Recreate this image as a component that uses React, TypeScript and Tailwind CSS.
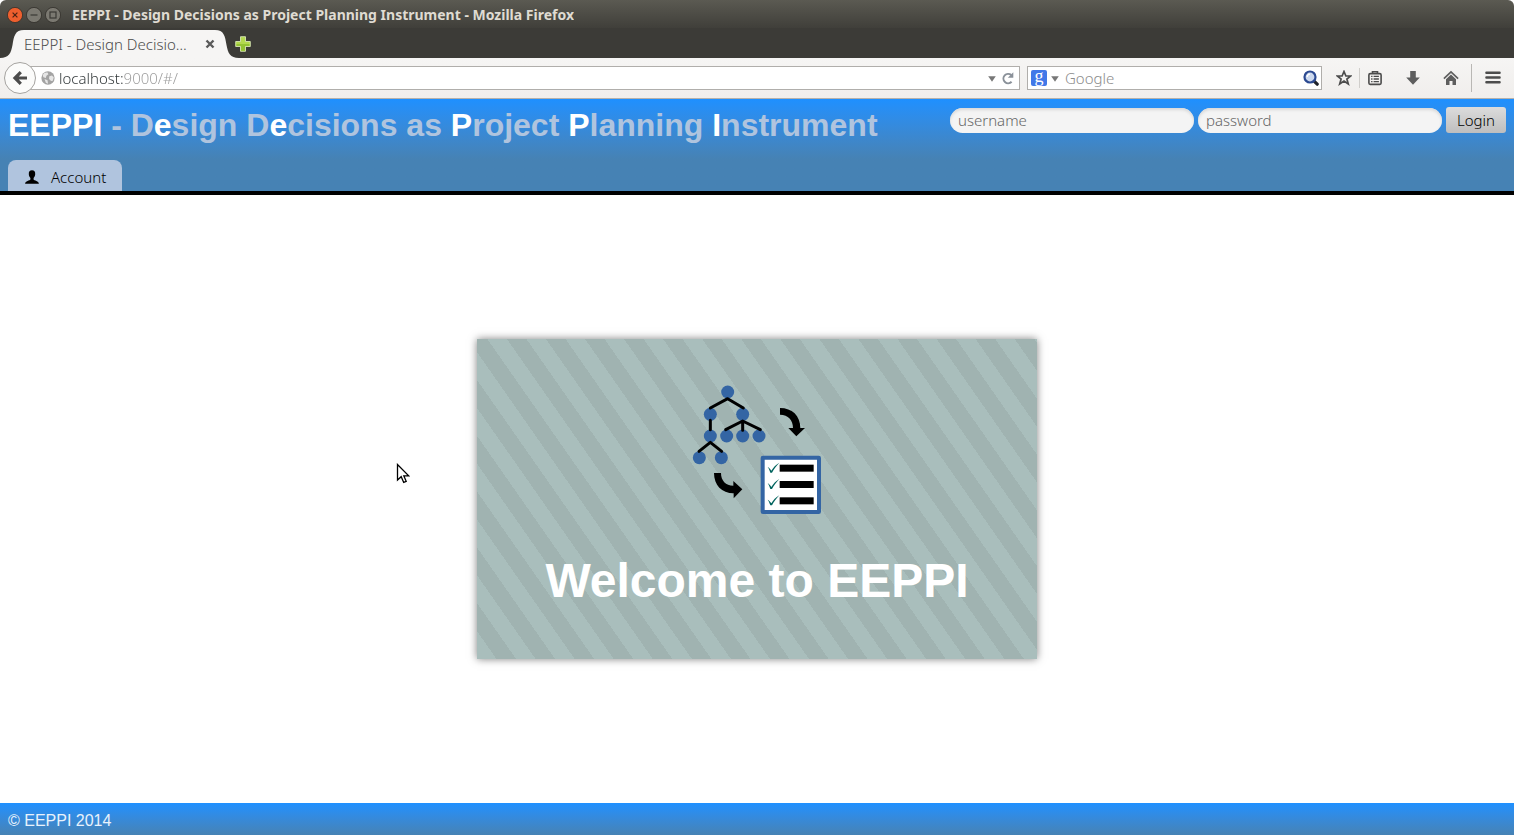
import type { ReactNode } from "react";

function TitleBar() {
  return (
    <div className="flex h-7 items-center gap-[3px] rounded-t-md bg-linear-to-b from-[#5b5a52] to-[#403f3a] pt-0.5 pl-[7px]">
      <button aria-label="Close window" className="size-4">
        <svg viewBox="0 0 16 16" className="size-4">
          <circle cx="8" cy="8" r="7.6" fill="#ee5f2e" stroke="#32302b" strokeWidth="0.8" />
          <path d="M5.600 5.600l4.800 4.800M10.400 5.600l-4.800 4.800" stroke="#4b2415" strokeWidth="1.200" />
        </svg>
      </button>
      <button aria-label="Minimize window" className="size-4">
        <svg viewBox="0 0 16 16" className="size-4">
          <circle cx="8" cy="8" r="7.6" fill="#7b7971" stroke="#32302b" strokeWidth="0.8" />
          <path d="M4.500 8h7" stroke="#3a3934" strokeWidth="1.200" />
        </svg>
      </button>
      <button aria-label="Maximize window" className="size-4">
        <svg viewBox="0 0 16 16" className="size-4">
          <circle cx="8" cy="8" r="7.6" fill="#7b7971" stroke="#32302b" strokeWidth="0.8" />
          <rect x="5" y="5" width="6" height="6" fill="none" stroke="#3a3934" strokeWidth="1.200" />
        </svg>
      </button>
      <p className="ml-2 truncate text-sm leading-5 font-bold text-[#dfdbd2]">
        EEPPI - Design Decisions as Project Planning Instrument - Mozilla Firefox
      </p>
    </div>
  );
}

function TabStrip() {
  return (
    <div className="flex h-[30px] items-end bg-[#3c3b37]">
      <svg viewBox="0 0 24 28" className="h-7 w-6 shrink-0">
        <path d="M0 28C9 28 11 23 12.500 15C14 6 15 0 24 0V28Z" fill="#f6f5f4" />
      </svg>
      <div className="flex h-7 w-[191px] items-center justify-between bg-[#f6f5f4]">
        <span className="text-[15px] leading-5 text-[#4c4c4c]">EEPPI - Design Decisio…</span>
        <button aria-label="Close tab" className="size-[10px]">
          <svg viewBox="0 0 10 10" className="size-[10px]">
            <path d="M1.500 1.500l7 7M8.500 1.500l-7 7" stroke="#5a5a5a" strokeWidth="2.400" />
          </svg>
        </button>
      </div>
      <svg viewBox="0 0 24 28" className="h-7 w-6 shrink-0">
        <path d="M24 28C15 28 13 23 11.500 15C10 6 9 0 0 0V28Z" fill="#f6f5f4" />
      </svg>
      <button aria-label="New tab" className="mb-1.5 -ml-1 size-4">
        <svg viewBox="0 0 16 16" className="size-4">
          <path d="M5.500 .7h5v4.800h4.800v5h-4.800v4.800h-5v-4.800H.7v-5h4.800z" fill="#b3d94f" stroke="#e3f1c0" strokeWidth="0.800" />
          <path d="M1.500 8h13v2h-4.500v4.700H6V10H1.500z" fill="#94c233" />
        </svg>
      </button>
    </div>
  );
}

function DropArrow() {
  return (
    <svg viewBox="0 0 8 6" className="mt-0.5 h-1.5 w-2 shrink-0">
      <path d="M.2 .3h7.600L4 5.800z" fill="#777777" />
    </svg>
  );
}

function ToolButton({ label, children }: { label: string; children: ReactNode }) {
  return (
    <button aria-label={label} className="size-4 shrink-0">
      <svg viewBox="0 0 16 16" className="size-4">
        {children}
      </svg>
    </button>
  );
}

function NavBar() {
  return (
    <div className="flex h-[41px] items-center border-b border-[#b5b0aa] bg-linear-to-b from-[#f6f5f4] to-[#f0eeec] pr-[13px] pl-1">
      <button aria-label="Back" className="z-10 size-8 shrink-0 rounded-full border border-[#a5a3a0] bg-[#fbfbfa] p-[7px]">
        <svg viewBox="0 0 16 16" className="size-4">
          <path d="M8.800 2.200L3 8l5.800 5.800M3.500 8H15" fill="none" stroke="#4c4c4c" strokeWidth="3.200" />
        </svg>
      </button>
      <div className="-ml-2 flex h-6 min-w-0 flex-1 items-center gap-1 border border-[#b0aeab] bg-white pr-[3px] pl-3">
        <svg viewBox="0 0 16 16" className="size-[14px] shrink-0">
          <circle cx="8" cy="8" r="7.600" fill="#a3a3a3" />
          <path d="M2 5C3 2 5.500 1.500 7.500 1.800L8.500 3.600L6.200 5.500L5.500 8L2.800 7.200ZM9.500 6L12.500 5L14.600 7L13.500 11L11.500 11.500L9.200 9ZM4 9L7.500 10.500L8 14.500L5.500 13.500Z" fill="#e6e6e6" />
        </svg>
        <input
          aria-label="Address"
          defaultValue="localhost:9000/#/"
          className="min-w-0 flex-1 bg-linear-to-r from-[#2e3436] from-[64px] to-[#999999] to-[64px] bg-clip-text text-[15px] leading-5 text-transparent caret-black outline-none"
        />
        <DropArrow />
        <button aria-label="Reload" className="size-4">
          <svg viewBox="0 0 16 16" className="size-4">
            <path d="M11.600 11.800A4.700 4.700 0 1 1 11.300 5.100" fill="none" stroke="#8a9199" strokeWidth="2" />
            <path d="M13.300 2.300V7.800H7.800z" fill="#8a9199" />
          </svg>
        </button>
      </div>
      <div className="ml-[7px] flex h-6 w-[295px] shrink items-center gap-1 border border-[#b0aeab] bg-white pr-0.5 pl-[3px]">
        <span className="flex size-4 shrink-0 items-center justify-center rounded-[2px] bg-[#4178e8] font-['Liberation_Serif',serif] text-lg leading-4 font-normal text-white">
          <span className="pb-1">g</span>
        </span>
        <DropArrow />
        <input
          aria-label="Search"
          placeholder="Google"
          className="ml-0.5 min-w-0 flex-1 text-[15px] leading-5 outline-none placeholder:text-[#8c8c8c]"
        />
        <button aria-label="Run search" className="size-4">
          <svg viewBox="0 0 16 16" className="size-4">
            <path d="M10.800 10.800L14.200 14.200" stroke="#20232b" strokeWidth="3.200" strokeLinecap="round" />
            <circle cx="7" cy="7" r="5.500" fill="#cdd9ee" stroke="#2c4a92" strokeWidth="2.200" />
            <path d="M4.200 7A3 3 0 0 1 7 4.200" fill="none" stroke="#ffffff" strokeWidth="1.300" />
          </svg>
        </button>
      </div>
      <div className="flex items-center pl-[14px]">
        <ToolButton label="Bookmark this page">
          <path d="M8 1.500L9.900 6H14.700L10.900 9L12.300 14L8 11.100L3.700 14L5.100 9L1.300 6H6.100Z" fill="none" stroke="#4c4c4c" strokeWidth="1.700" />
        </ToolButton>
        <span className="ml-[7px] h-5 w-px bg-[#d0cecb]" />
        <span className="ml-[7px] flex">
          <ToolButton label="Bookmarks">
            <path d="M5.500 3V1.800h5V3" fill="none" stroke="#4c4c4c" strokeWidth="1.600" />
            <rect x="1.900" y="3.600" width="12.200" height="10.800" rx="1.300" fill="none" stroke="#4c4c4c" strokeWidth="1.600" />
            <path d="M4.100 6.400h1.400M6.600 6.400h5.300M4.100 9h1.400M6.600 9h5.300M4.100 11.600h1.400M6.600 11.600h5.300" stroke="#4c4c4c" strokeWidth="1.400" />
          </ToolButton>
        </span>
        <span className="ml-[22px] flex">
          <ToolButton label="Downloads">
            <path d="M5.200 1h5.600v6.400h4L8 14.800L1.200 7.400h4z" fill="#5e5e5e" />
          </ToolButton>
        </span>
        <span className="ml-[22px] flex">
          <ToolButton label="Home">
            <path d="M.9 8.600L8 1.900l7.100 6.700" fill="none" stroke="#5e5e5e" strokeWidth="1.700" />
            <path d="M3 9.200L8 4.600l5 4.600V15H9.500v-4h-3v4H3z" fill="#5e5e5e" />
          </ToolButton>
        </span>
        <span className="ml-3 h-7 w-px bg-[#b9b7b4]" />
        <span className="ml-[13px] flex">
          <ToolButton label="Open menu">
            <path d="M1.400 2.800h13.200M1.400 7.500h13.200M1.400 12.200h13.200" stroke="#4c4c4c" strokeWidth="2.400" strokeLinecap="round" />
          </ToolButton>
        </span>
      </div>
    </div>
  );
}

function Key({ children }: { children: ReactNode }) {
  return <span className="text-white">{children}</span>;
}

function AppHeader() {
  const field =
    "h-[25px] w-[244px] min-w-0 rounded-full bg-[#f4f4f4] px-2 text-[15px] leading-5 text-black shadow-[inset_0_2px_3px_#d8d8d8] outline-none placeholder:text-[#666666]";
  return (
    <header className="flex h-24 flex-col justify-between border-b-4 border-black bg-linear-to-b from-[#1e90ff] to-[#4682b4] to-[60px] px-2">
      <div className="flex items-start justify-between gap-4">
        <h1 className="mt-2 font-['Liberation_Sans',sans-serif] text-[32px] leading-9 font-bold whitespace-nowrap text-[#b0c4de]">
          <Key>EEPPI</Key> - D<Key>e</Key>sign D<Key>e</Key>cisions as <Key>P</Key>roject <Key>P</Key>lanning{" "}
          <Key>I</Key>nstrument
        </h1>
        <form className="mt-2 flex min-w-0 items-center gap-1" onSubmit={(e) => e.preventDefault()}>
          <input aria-label="username" placeholder="username" className={field} />
          <input aria-label="password" type="password" placeholder="password" className={field} />
          <button className="h-[26px] w-[60px] shrink-0 rounded-[3px] bg-linear-to-b from-[#dcdcdc] to-[#bebebe] text-[15px] leading-5 text-black">
            Login
          </button>
        </form>
      </div>
      <nav className="flex">
        <a href="#/account" className="flex h-[31px] items-center gap-3 rounded-t-lg bg-[#b0c4de] pt-0.5 pr-4 pl-[17px] text-[15px] leading-5 text-black">
          <svg viewBox="0 0 14 14" className="size-[14px]">
            <path d="M7 .2C9.300 .2 10.400 1.800 10.200 4.200C10.100 6 9.300 7.200 8.600 8V9.500C9.200 10.700 13.700 10.900 13.900 13.800H.1C.3 10.900 4.800 10.700 5.400 9.500V8C4.700 7.200 3.900 6 3.800 4.200C3.600 1.800 4.700 .2 7 .2Z" />
          </svg>
          Account
        </a>
      </nav>
    </header>
  );
}

const nodes = [
  [143, 51], [91, 118], [188, 118], [91, 183], [140, 183], [188, 183], [237, 183], [58, 248], [124, 248],
];

function Illustration() {
  return (
    <svg viewBox="36 30 390 390" className="size-[130px]" aria-hidden="true">
      {nodes.map(([x, y]) => (
        <circle key={`${x}-${y}`} cx={x} cy={y} r="19.500" fill="#3465a4" />
      ))}
      <path
        d="M91 99L143 71L190 99M91 136V164M137 164L188 138L241 164M188 138V166M57 229L91 202L125 229"
        fill="none"
        stroke="#000"
        strokeWidth="9"
        strokeLinecap="round"
        strokeLinejoin="round"
      />
      <path d="M300 99C336 99 361 122 361 159H375L349 184L325 159H339C339 136 325 119 300 119Z" />
      <path d="M102 294H123C123 317 137 332 160 332V318L187 343L161 370V355C125 355 102 330 102 294Z" />
      <rect x="248" y="248" width="169" height="163" rx="1" fill="#fff" stroke="#3465a4" strokeWidth="12" />
      {[280, 329, 378].map((y) => (
        <g key={y} transform={`translate(0 ${y})`}>
          <rect x="299" y="-11" width="102" height="21" />
          <path d="M263 -4C267 -3 271 3 274 7C280 -3 287 -11 298 -17C289 -7 281 3 276 13H271C269 7 267 1 263 -4Z" fill="#00635d" />
        </g>
      ))}
    </svg>
  );
}

function Cursor() {
  return (
    <svg viewBox="0 0 14 22" className="pointer-events-none absolute top-[268px] left-[396px] h-[22px] w-[14px]">
      <path d="M1.500 1.500V17L5.200 13.700L7.700 19.400L10.200 18.300L7.800 12.800H12.700Z" fill="#fff" stroke="#000" strokeWidth="1.300" />
    </svg>
  );
}

export default function App() {
  return (
    <div className="flex min-h-screen flex-col bg-white font-['Noto_Sans',sans-serif] font-light">
      <TitleBar />
      <TabStrip />
      <NavBar />
      <AppHeader />
      <main className="relative flex flex-1 items-center justify-center">
        <section className="flex h-80 w-full max-w-[560px] flex-col items-center justify-between bg-[repeating-linear-gradient(55deg,#a9bebc_0px,#a9bebc_16px,#a0b3b1_16px,#a0b3b1_32px)] pt-[46px] pb-[54px] shadow-[0_0_8px_rgba(0,0,0,0.5)]">
          <Illustration />
          <h2 className="text-center font-['Liberation_Sans',sans-serif] text-5xl font-bold text-white">
            Welcome to EEPPI
          </h2>
        </section>
        <Cursor />
      </main>
      <footer className="h-8 bg-linear-to-b from-[#1e90ff] to-[#4682b4] px-2 pt-1.5 font-['Liberation_Sans',sans-serif] text-base leading-6 font-normal text-[#e8f2fc]">
        © EEPPI 2014
      </footer>
    </div>
  );
}
